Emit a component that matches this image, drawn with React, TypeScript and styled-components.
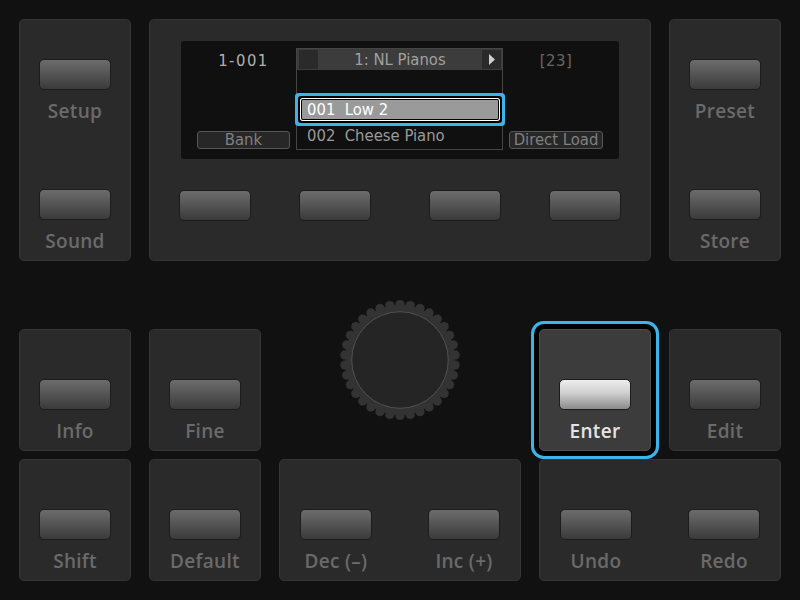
import React from 'react';
import styled, { createGlobalStyle, css } from 'styled-components';

const GlobalStyle = createGlobalStyle`
  html, body { margin: 0; padding: 0; background: #111111; }
  body { width: 800px; height: 600px; overflow: hidden; font-family: "Open Sans", "Noto Sans", sans-serif; }
`;

const Board = styled.div`
  display: grid;
  grid-template-columns: 112px 112px 242px 112px 112px;
  grid-template-rows: 242px 52px 122px 122px;
  column-gap: 18px;
  row-gap: 8px;
  padding: 19px;
  width: 800px;
  height: 600px;
  box-sizing: border-box;
`;

type Layout = 'pair' | 'single' | 'row' | 'center';

const Panel = styled.div<{ $col: string; $row: string; $layout: Layout; $active?: boolean }>`
  grid-column: ${(p) => p.$col};
  grid-row: ${(p) => p.$row};
  box-sizing: border-box;
  background: ${(p) => (p.$active ? '#3c3c3c' : '#2a2a2a')};
  border: 1px solid ${(p) => (p.$active ? '#4e4e4e' : '#353535')};
  border-radius: 5px;
  display: flex;
  ${(p) => p.$active && css`box-shadow: 0 0 0 5px #000000, 0 0 0 8px #3cb4ea;`}
  ${(p) =>
    p.$layout === 'pair' &&
    css`
      flex-direction: column;
      align-items: center;
      justify-content: space-between;
      padding: 39px 0 8px;
    `}
  ${(p) =>
    p.$layout === 'single' &&
    css`
      flex-direction: column;
      align-items: center;
      justify-content: flex-end;
      padding-bottom: 8px;
    `}
  ${(p) =>
    p.$layout === 'row' &&
    css`
      flex-direction: row;
      align-items: flex-end;
      justify-content: space-between;
      padding: 0 20px 8px;
    `}
  ${(p) =>
    p.$layout === 'center' &&
    css`
      flex-direction: column;
      align-items: center;
      padding-top: 21px;
    `}
`;

const Key = styled.div`
  width: 72px;
  display: flex;
  flex-direction: column;
  align-items: center;
`;

const KeyCap = styled.div<{ $lit?: boolean }>`
  width: 72px;
  height: 31px;
  box-sizing: border-box;
  border: 1px solid #1c1c1c;
  border-radius: 5px;
  background: ${(p) =>
    p.$lit
      ? 'linear-gradient(to bottom, #eeeeee 0%, #cfcfcf 45%, #8a8a8a 100%)'
      : 'linear-gradient(to bottom, #6c6c6c 0%, #565656 45%, #3a3a3a 100%)'};
  flex-shrink: 0;
`;

const KeyLabel = styled.div<{ $lit?: boolean }>`
  margin-top: 10px;
  font-family: "Open Sans", "Noto Sans", sans-serif;
  font-weight: 600;
  font-size: 19px;
  line-height: 22px;
  letter-spacing: 0.3px;
  white-space: nowrap;
  color: ${(p) => (p.$lit ? '#e4e4e4' : '#6a6a6a')};
`;

const KnobSlot = styled.div`
  grid-column: 3;
  grid-row: 2 / span 2;
  display: flex;
  align-items: center;
  justify-content: center;
`;

const lcdFont = css`
  font-family: "DejaVu Sans Condensed", "DejaVu Sans", sans-serif;
  font-stretch: condensed;
  font-size: 16.5px;
`;

const Lcd = styled.div`
  width: 438px;
  height: 118px;
  box-sizing: border-box;
  padding: 7px 0 9px;
  background: #101010;
  border-radius: 3px;
  display: grid;
  grid-template-columns: 115px 207px 116px;
`;

const LcdSide = styled.div<{ $side: 'left' | 'right' }>`
  display: flex;
  flex-direction: column;
  align-items: center;
  justify-content: space-between;
  padding: ${(p) => (p.$side === 'left' ? '0 6px 0 16px' : '0 16px 0 6px')};
`;

const LcdValue = styled.div<{ $dim?: boolean }>`
  ${lcdFont};
  padding-top: 2px;
  line-height: 22px;
  letter-spacing: ${(p) => (p.$dim ? '0.5px' : '1.5px')};
  color: ${(p) => (p.$dim ? '#666666' : '#b0b0b0')};
`;

const SoftTag = styled.div`
  ${lcdFont};
  width: 100%;
  height: 18px;
  box-sizing: border-box;
  margin-bottom: 1px;
  border: 1px solid #565656;
  border-radius: 3px;
  background: #272727;
  color: #808080;
  line-height: 16px;
  text-align: center;
  white-space: nowrap;
`;

const Dropdown = styled.div`
  border: 1px solid #454545;
  display: flex;
  flex-direction: column;
  box-sizing: border-box;
`;

const DropHeader = styled.div`
  height: 21px;
  background: #3c3c3c;
  display: flex;
  align-items: center;
  padding: 0 1px 0 2px;
`;

const HeadSquare = styled.div`
  width: 19px;
  height: 19px;
  background: #2a2a2a;
  display: flex;
  align-items: center;
  justify-content: center;
  flex-shrink: 0;
`;

const HeadTitle = styled.div`
  ${lcdFont};
  flex: 1;
  text-align: center;
  color: #a0a0a0;
  line-height: 21px;
`;

const DropList = styled.div`
  flex: 1;
  padding: 30px 4px 0 5px;
`;

const SelRow = styled.div`
  ${lcdFont};
  height: 19px;
  line-height: 19px;
  padding-left: 5px;
  background: #9a9a9a;
  color: #ffffff;
  white-space: pre;
  box-shadow: 0 0 0 1px #000000, 0 0 0 2px #ffffff, 0 0 0 4px #000000, 0 0 0 7px #3cb4ea;
  border-radius: 1px;
`;

const ListRow = styled.div`
  ${lcdFont};
  margin-top: 7px;
  height: 20px;
  line-height: 20px;
  padding-left: 5px;
  color: #9a9a9a;
  white-space: pre;
`;

const SoftRow = styled.div`
  width: 100%;
  box-sizing: border-box;
  margin-top: 31px;
  padding: 0 29px;
  display: flex;
  justify-content: space-between;
`;

const SoftPair = styled.div`
  display: flex;
  gap: 48px;
`;

const Knob: React.FC = () => {
  const teeth = 34;
  const R = 55.4;
  const c = 62;
  return (
    <svg width="124" height="124" viewBox="0 0 124 124">
      <circle cx={c} cy={c} r={R - 0.5} fill="#333333" />
      {Array.from({ length: teeth }).map((_, i) => {
        const a = (i / teeth) * Math.PI * 2 - Math.PI / 2;
        return <circle key={i} cx={c + R * Math.cos(a)} cy={c + R * Math.sin(a)} r={4.6} fill="#333333" />;
      })}
      <circle cx={c} cy={c} r={48.3} fill="#252525" stroke="#505050" strokeWidth="1" />
    </svg>
  );
};

const Btn: React.FC<{ label: string; lit?: boolean }> = ({ label, lit }) => (
  <Key>
    <KeyCap $lit={lit} />
    <KeyLabel $lit={lit}>{label}</KeyLabel>
  </Key>
);

export default function App() {
  return (
    <>
      <GlobalStyle />
      <Board>
        <Panel $col="1" $row="1" $layout="pair">
          <Btn label="Setup" />
          <Btn label="Sound" />
        </Panel>

        <Panel $col="2 / span 3" $row="1" $layout="center">
          <Lcd>
            <LcdSide $side="left">
              <LcdValue>1-001</LcdValue>
              <SoftTag>Bank</SoftTag>
            </LcdSide>
            <Dropdown>
              <DropHeader>
                <HeadSquare />
                <HeadTitle>1: NL Pianos</HeadTitle>
                <HeadSquare>
                  <svg width="8" height="11" viewBox="0 0 8 11">
                    <polygon points="1,0 7,5.5 1,11" fill="#cfcfcf" />
                  </svg>
                </HeadSquare>
              </DropHeader>
              <DropList>
                <SelRow>{'001  Low 2'}</SelRow>
                <ListRow>{'002  Cheese Piano'}</ListRow>
              </DropList>
            </Dropdown>
            <LcdSide $side="right">
              <LcdValue $dim>[23]</LcdValue>
              <SoftTag>Direct Load</SoftTag>
            </LcdSide>
          </Lcd>
          <SoftRow>
            <SoftPair>
              <KeyCap />
              <KeyCap />
            </SoftPair>
            <SoftPair>
              <KeyCap />
              <KeyCap />
            </SoftPair>
          </SoftRow>
        </Panel>

        <Panel $col="5" $row="1" $layout="pair">
          <Btn label="Preset" />
          <Btn label="Store" />
        </Panel>

        <Panel $col="1" $row="3" $layout="single">
          <Btn label="Info" />
        </Panel>
        <Panel $col="2" $row="3" $layout="single">
          <Btn label="Fine" />
        </Panel>
        <KnobSlot>
          <Knob />
        </KnobSlot>
        <Panel $col="4" $row="3" $layout="single" $active>
          <Btn label="Enter" lit />
        </Panel>
        <Panel $col="5" $row="3" $layout="single">
          <Btn label="Edit" />
        </Panel>

        <Panel $col="1" $row="4" $layout="single">
          <Btn label="Shift" />
        </Panel>
        <Panel $col="2" $row="4" $layout="single">
          <Btn label="Default" />
        </Panel>
        <Panel $col="3" $row="4" $layout="row">
          <Btn label="Dec (–)" />
          <Btn label="Inc (+)" />
        </Panel>
        <Panel $col="4 / span 2" $row="4" $layout="row">
          <Btn label="Undo" />
          <Btn label="Redo" />
        </Panel>
      </Board>
    </>
  );
}
